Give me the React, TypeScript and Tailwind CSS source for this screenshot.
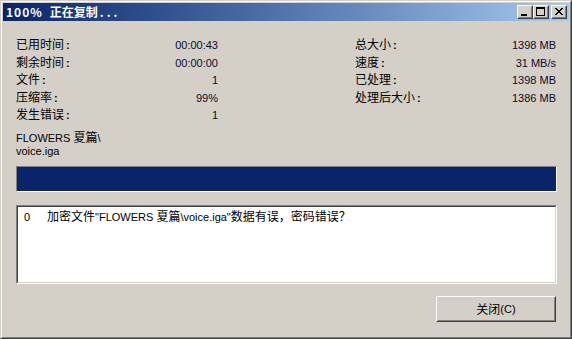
import React from "react";

const CJK = /[\u3000-\u9fff\uff00-\uffef]/;

function T({ s }: { s: string }) {
  const parts = s.match(/[\u3000-\u9fff\uff00-\uffef]+|[^\u3000-\u9fff\uff00-\uffef]+/g) || [];
  return (
    <>
      {parts.map((p, i) =>
        CJK.test(p) ? (
          <span key={i} className="font-['Noto_Sans_CJK_SC',sans-serif] text-[12px]">
            {p}
          </span>
        ) : (
          <span key={i} className="font-['Liberation_Sans',sans-serif] text-[11px]">
            {p}
          </span>
        )
      )}
    </>
  );
}

function CapButton({ children }: { children: React.ReactNode }) {
  return (
    <div className="w-[16px] h-[14px] border border-t-white border-l-white border-r-[#404040] border-b-[#404040] bg-[#d4d0c8]">
      <div className="w-full h-full border border-t-[#d4d0c8] border-l-[#d4d0c8] border-r-[#808080] border-b-[#808080]">
        {children}
      </div>
    </div>
  );
}

const left: [string, string][] = [
  ["已用时间", "00:00:43"],
  ["剩余时间", "00:00:00"],
  ["文件", "1"],
  ["压缩率", "99%"],
  ["发生错误", "1"],
];

const right: [string, string][] = [
  ["总大小", "1398 MB"],
  ["速度", "31 MB/s"],
  ["已处理", "1398 MB"],
  ["处理后大小", "1386 MB"],
];

function Row({ l, v }: { l: string; v: string }) {
  return (
    <div className="flex justify-between items-center h-[17.5px] leading-[17.5px] whitespace-nowrap">
      <span className="text-black">
        <T s={l} />
        <span className="pl-[2px] font-['Liberation_Sans',sans-serif] text-[11px] font-bold">:</span>
      </span>
      <span className="text-[#0a0a2a]">
        <T s={v} />
      </span>
    </div>
  );
}

export default function App() {
  const xCells: number[] = [0, 1, 2, 3, 4, 5, 6];
  return (
    <div className="w-[572px] h-[339px] bg-[#d4d0c8] border border-t-[#d4d0c8] border-l-[#d4d0c8] border-r-[#404040] border-b-[#404040]">
      <div className="w-full h-full border border-t-white border-l-white border-r-[#808080] border-b-[#808080] p-px flex flex-col">
        {/* Title bar */}
        <div className="h-[18px] flex items-center bg-gradient-to-r from-[#0a246a] to-[#a6caf0] pl-[3px] pr-[2px]">
          <div className="flex-1 text-white font-bold font-['Noto_Sans_CJK_SC',sans-serif] text-[12px] leading-[18px] whitespace-nowrap">
            <span className="tracking-[1px]">100%</span>
            <span className="pl-[7px]">正在复制</span>
            <span className="tracking-[3px] pl-[2px]">...</span>
          </div>
          <div className="flex items-center">
            <CapButton>
              <svg width="12" height="10" shapeRendering="crispEdges">
                <rect x="2" y="7" width="6" height="2" fill="#000" />
              </svg>
            </CapButton>
            <CapButton>
              <svg width="12" height="10" shapeRendering="crispEdges">
                <rect x="1" y="0" width="9" height="2" fill="#000" />
                <rect x="1" y="0" width="1" height="9" fill="#000" />
                <rect x="9" y="0" width="1" height="9" fill="#000" />
                <rect x="1" y="8" width="9" height="1" fill="#000" />
              </svg>
            </CapButton>
            <div className="w-[2px]" />
            <CapButton>
              <svg width="12" height="10" shapeRendering="crispEdges">
                {xCells.map((i) => (
                  <React.Fragment key={i}>
                    <rect x={2 + i} y={1 + i} width="2" height="1" fill="#000" />
                    <rect x={8 - i} y={1 + i} width="2" height="1" fill="#000" />
                  </React.Fragment>
                ))}
              </svg>
            </CapButton>
          </div>
        </div>

        {/* Body */}
        <div className="flex flex-col pl-[13px] pr-[12px] pt-[15px]">
          <div className="flex">
            <div className="w-[202px] flex flex-col">
              {left.map(([l, v]) => (
                <Row key={l} l={l} v={v} />
              ))}
            </div>
            <div className="w-[201px] ml-[137px] flex flex-col">
              {right.map(([l, v]) => (
                <Row key={l} l={l} v={v} />
              ))}
            </div>
          </div>

          <div className="mt-[6px] leading-[13px] text-black whitespace-nowrap">
            <div className="h-[13px] leading-[13px]">
              <T s="FLOWERS 夏篇\" />
            </div>
            <div className="h-[13px] leading-[13px]">
              <T s="voice.iga" />
            </div>
          </div>

          {/* Progress */}
          <div className="mt-[10px] h-[26px] border border-t-[#808080] border-l-[#808080] border-r-white border-b-white bg-[#0a246a]" />

          {/* List */}
          <div className="mt-[13px] h-[79px] border border-t-[#808080] border-l-[#808080] border-r-white border-b-white">
            <div className="w-full h-full border border-t-[#404040] border-l-[#404040] border-r-[#d4d0c8] border-b-[#d4d0c8] bg-white">
              <div className="flex h-[16px] leading-[16px] whitespace-nowrap text-black">
                <div className="w-[29px] pl-[6px]">
                  <T s="0" />
                </div>
                <div>
                  <T s={'加密文件"FLOWERS 夏篇\\voice.iga"数据有误，密码错误？'} />
                </div>
              </div>
            </div>
          </div>

          {/* Button */}
          <div className="mt-[12px] self-end mr-px w-[120px] h-[26px] border border-t-white border-l-white border-r-[#404040] border-b-[#404040]">
            <div className="w-full h-full border border-t-[#d4d0c8] border-l-[#d4d0c8] border-r-[#808080] border-b-[#808080] flex items-center justify-center text-black leading-[16px]">
              <T s="关闭(C)" />
            </div>
          </div>
        </div>
      </div>
    </div>
  );
}
